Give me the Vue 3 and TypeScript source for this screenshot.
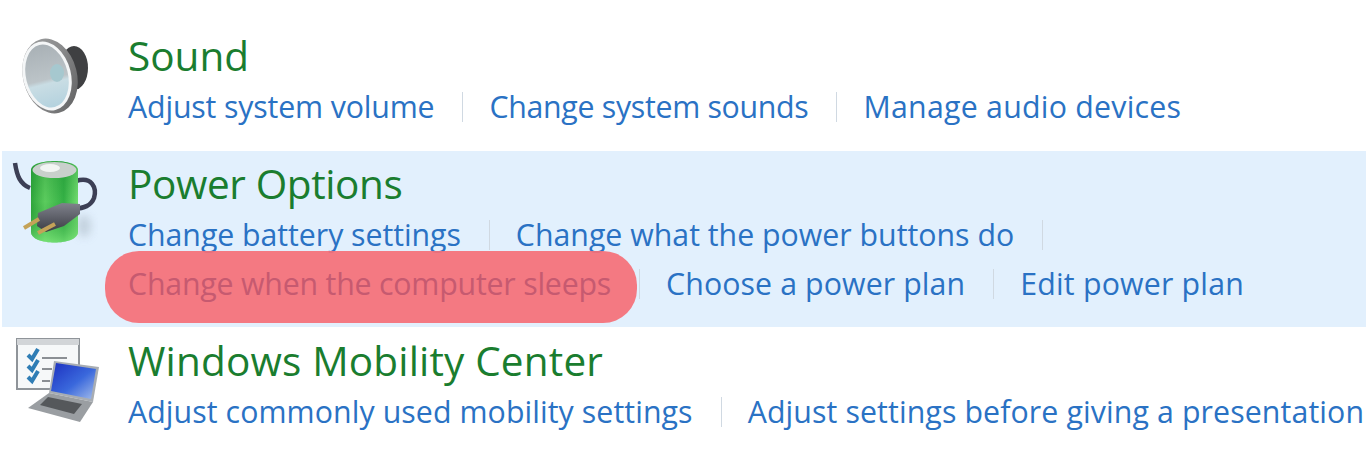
<script setup lang="ts">
interface Link {
  text: string;
  spacing: number;
  marked?: boolean;
  // the list wraps here, the separator stays at the end of the line
  tail?: boolean;
}

interface Group {
  title: string;
  spacing: number;
  icon: 'sound' | 'power' | 'mobility';
  active?: boolean;
  lines: Link[][];
}

const groups: Group[] = [
  {
    title: 'Sound',
    spacing: 0,
    icon: 'sound',
    lines: [
      [
        { text: 'Adjust system volume', spacing: -0.15 },
        { text: 'Change system sounds', spacing: -0.3 },
        { text: 'Manage audio devices', spacing: 0.25 },
      ],
    ],
  },
  {
    title: 'Power Options',
    spacing: -0.38,
    icon: 'power',
    active: true,
    lines: [
      [
        { text: 'Change battery settings', spacing: -0.05 },
        { text: 'Change what the power buttons do', spacing: 0, tail: true },
      ],
      [
        { text: 'Change when the computer sleeps', spacing: -0.2, marked: true },
        { text: 'Choose a power plan', spacing: 0.1 },
        { text: 'Edit power plan', spacing: 0.2 },
      ],
    ],
  },
  {
    title: 'Windows Mobility Center',
    spacing: 0.17,
    icon: 'mobility',
    lines: [
      [
        { text: 'Adjust commonly used mobility settings', spacing: 0.08 },
        { text: 'Adjust settings before giving a presentation', spacing: 0.11 },
      ],
    ],
  },
];
</script>

<template>
  <div class="panel">
    <section v-for="g in groups" :key="g.title" class="group" :class="[g.icon, { active: g.active }]">
      <div class="icon">
        <svg v-if="g.icon === 'sound'" width="72" height="80" viewBox="20 36 72 80">
          <defs>
            <linearGradient id="cone" x1="0" x2="0" y1="0" y2="1">
              <stop offset="0" stop-color="#a9b1b6" />
              <stop offset="0.55" stop-color="#bcc4c8" />
              <stop offset="0.62" stop-color="#c9dde4" />
              <stop offset="1" stop-color="#b4d2de" />
            </linearGradient>
            <linearGradient id="rim" x1="0" x2="1" y1="0" y2="1">
              <stop offset="0" stop-color="#a3a5a6" />
              <stop offset="0.5" stop-color="#8a8b8c" />
              <stop offset="1" stop-color="#5b5b5c" />
            </linearGradient>
          </defs>
          <ellipse cx="74" cy="68" rx="14" ry="22" fill="#3f4042" />
          <ellipse cx="50" cy="76" rx="27" ry="38" transform="rotate(-14 50 76)" fill="url(#rim)" />
          <ellipse cx="47" cy="76" rx="24" ry="35" transform="rotate(-14 47 76)" fill="#f4f6f7" />
          <ellipse cx="47" cy="76" rx="21" ry="32" transform="rotate(-14 47 76)" fill="url(#cone)" />
          <ellipse cx="57" cy="73" rx="7" ry="9" fill="#a6c8cf" />
        </svg>

        <svg v-else-if="g.icon === 'power'" width="88" height="86" viewBox="12 160 88 86">
          <defs>
            <linearGradient id="cell" x1="0" x2="1" y1="0" y2="0">
              <stop offset="0" stop-color="#2fa63c" />
              <stop offset="0.3" stop-color="#5ccc5e" />
              <stop offset="0.7" stop-color="#34b045" />
              <stop offset="1" stop-color="#72dc70" />
            </linearGradient>
            <linearGradient id="glow" x1="0" x2="0" y1="0" y2="1">
              <stop offset="0" stop-color="#0c7a24" stop-opacity="0.3" />
              <stop offset="0.5" stop-color="#0c7a24" stop-opacity="0" />
              <stop offset="1" stop-color="#8af084" stop-opacity="0.6" />
            </linearGradient>
            <linearGradient id="plug" x1="0" x2="0" y1="0" y2="1">
              <stop offset="0" stop-color="#80828c" />
              <stop offset="1" stop-color="#3b3d45" />
            </linearGradient>
            <filter id="soft" x="-50%" y="-50%" width="200%" height="200%">
              <feGaussianBlur stdDeviation="4" />
            </filter>
          </defs>
          <ellipse cx="84" cy="226" rx="7" ry="11" fill="#b6c4d0" opacity="0.7" filter="url(#soft)" />
          <path d="M15 163 C17 176 20 184 30 188" fill="none" stroke="#3c3f55" stroke-width="4.5" />
          <path d="M76 181 C92 176 97 188 94 198 C91 206 84 208 74 209" fill="none" stroke="#3c3f55" stroke-width="4.5" />
          <path d="M31 170 C31 158 78 158 78 170 V232 C78 246 31 246 31 232 Z" fill="url(#cell)" />
          <path d="M31 170 C31 158 78 158 78 170 V232 C78 246 31 246 31 232 Z" fill="url(#glow)" />
          <ellipse cx="54.5" cy="170" rx="22" ry="8" fill="#c9d0cc" />
          <ellipse cx="50" cy="168" rx="10" ry="4" fill="#f2f5f3" />
          <path d="M38 213 L62 203 L80 204 L80 214 L64 226 L46 232 L37 226 Z" fill="url(#plug)" />
          <path d="M24 228 L39 219" stroke="#c4a258" stroke-width="4" />
          <path d="M38 233 L55 224" stroke="#c4a258" stroke-width="4" />
        </svg>

        <svg v-else width="88" height="90" viewBox="14 336 88 90">
          <defs>
            <linearGradient id="screen" x1="0" x2="1" y1="0" y2="1">
              <stop offset="0" stop-color="#1c30c0" />
              <stop offset="0.55" stop-color="#3a68dc" />
              <stop offset="1" stop-color="#a4bdea" />
            </linearGradient>
          </defs>
          <rect x="17" y="339" width="62" height="50" fill="#f6f8f9" stroke="#8f9499" stroke-width="2" />
          <rect x="17" y="339" width="62" height="6" fill="#d2d5d8" />
          <path d="M28 355 l4 4 l6 -10 M28 366 l4 4 l6 -10 M28 377 l4 4 l6 -10" fill="none" stroke="#2f7db5" stroke-width="4" />
          <path d="M42 358 H67 M42 369 H52 M42 381 H50" stroke="#8b8f94" stroke-width="2" />
          <path d="M54 361 L99 367 L93 402 L49 393 Z" fill="#a8adb3" />
          <path d="M56 363 L96 369 L91 399 L51 391 Z" fill="url(#screen)" />
          <path d="M49 393 L93 402 L80 422 L28 408 Z" fill="#9a9ea2" />
          <path d="M48 397 L82 404 L74 414 L40 405 Z" fill="#55585b" />
        </svg>
      </div>
      <div class="body">
        <h3 class="title" :style="{ letterSpacing: g.spacing + 'px' }">{{ g.title }}</h3>
        <div v-for="(line, i) in g.lines" :key="i" class="links">
          <span v-for="link in line" :key="link.text" class="link" :class="{ marked: link.marked, tail: link.tail }">
            <a :style="{ letterSpacing: link.spacing + 'px' }">{{ link.text }}</a>
          </span>
        </div>
      </div>
    </section>
  </div>
</template>

<style>
html,
body {
  background: #fff;
}
</style>

<style scoped>
.panel {
  width: 1366px;
  height: 467px;
  padding-top: 23px;
  box-sizing: border-box;
  overflow: hidden;
  font-family: "Open Sans", "Noto Sans", sans-serif;
}

.group {
  display: flex;
  height: 128px;
  box-sizing: border-box;
  margin-left: 2px;
}

.group.active {
  height: 176px;
  background: #e2f0fd;
}

.icon {
  width: 126px;
  flex: none;
  box-sizing: border-box;
}

.icon svg {
  display: block;
  filter: blur(0.6px);
}

.sound .icon {
  padding: 13px 0 0 18px;
}

.power .icon {
  padding: 9px 0 0 10px;
}

.mobility .icon {
  padding: 9px 0 0 12px;
}

.title {
  margin: 0;
  font-size: 40.5px;
  line-height: 52px;
  font-weight: 400;
  color: #1a7d2f;
  padding-top: 7px;
}

.mobility .title {
  padding-top: 8px;
}

.links {
  display: flex;
  height: 49px;
  align-items: center;
  font-size: 30.3px;
  color: #2a72c4;
  white-space: nowrap;
}

.link {
  position: relative;
  padding-right: 28px;
  margin-right: 26px;
  border-right: 1px solid #d0d9e2;
  line-height: 30px;
}

.link:last-child {
  border-right: 0;
  margin-right: 0;
  padding-right: 0;
}

.link.tail {
  padding-right: 28px;
  border-right: 1px solid #d0d9e2;
}

.marked::before {
  content: "";
  position: absolute;
  left: -23px;
  right: 2px;
  top: -18px;
  bottom: -24px;
  background: rgba(245, 112, 120, 0.93);
  border-radius: 34px;
}

.marked a {
  position: relative;
  color: #c65a70;
}
</style>
